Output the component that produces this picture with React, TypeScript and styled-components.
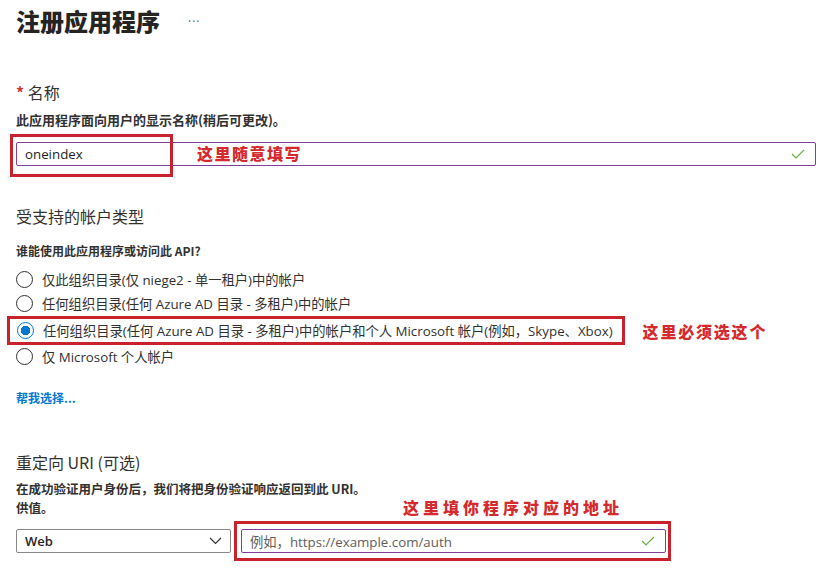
import { createGlobalStyle, styled } from 'styled-components';

const GlobalStyle = createGlobalStyle`
  body {
    margin: 0;
    background: #ffffff;
    font-family: 'Open Sans', 'Noto Sans CJK SC', sans-serif;
    color: #323130;
  }
`;

const accounts = [
  '仅此组织目录(仅 niege2 - 单一租户)中的帐户',
  '任何组织目录(任何 Azure AD 目录 - 多租户)中的帐户',
  '任何组织目录(任何 Azure AD 目录 - 多租户)中的帐户和个人 Microsoft 帐户(例如，Skype、Xbox)',
  '仅 Microsoft 个人帐户',
];

function Check() {
  return (
    <svg width="14" height="10" viewBox="0 0 14 10">
      <path d="M1 5 L5 9 L13 1" fill="none" stroke="#6bb244" strokeWidth="1.2" />
    </svg>
  );
}

function Chevron() {
  return (
    <svg width="13" height="8" viewBox="0 0 13 8">
      <path d="M1 1 L6.5 6.5 L12 1" fill="none" stroke="#323130" strokeWidth="1.1" />
    </svg>
  );
}

export default function App() {
  return (
    <Page>
      <GlobalStyle />
      <TitleRow>
        <Title>注册应用程序</Title>
        <More>···</More>
      </TitleRow>

      <Label $top={44}>
        <Star>*</Star> 名称
      </Label>
      <Hint $top={9} $size={13}>
        此应用程序面向用户的显示名称(稍后可更改)。
      </Hint>
      <NameField>
        <TextBox>
          <span>oneindex</span>
          <Check />
        </TextBox>
        <MarkBox />
        <FloatNote $spacing={1.5}>这里随意填写</FloatNote>
      </NameField>

      <Label $top={39}>受支持的帐户类型</Label>
      <Hint $top={16} $size={12}>
        谁能使用此应用程序或访问此 API?
      </Hint>
      <Options>
        {accounts.map((text, i) =>
          i === 2 ? (
            <MarkedRow key={text}>
              <Marked>
                <Option>
                  <Radio $on />
                  {text}
                </Option>
              </Marked>
              <Note $spacing={1.8}>这里必须选这个</Note>
            </MarkedRow>
          ) : (
            <Option key={text}>
              <Radio />
              {text}
            </Option>
          ),
        )}
      </Options>
      <HelpLink href="#">帮我选择...</HelpLink>

      <Label $top={45}>重定向 URI (可选)</Label>
      <DescRow>
        <Desc>
          在成功验证用户身份后，我们将把身份验证响应返回到此 URI。
          <br />
          供值。
        </Desc>
        <Note $spacing={4}>这里填你程序对应的地址</Note>
      </DescRow>
      <UriRow>
        <Select>
          <span>Web</span>
          <Chevron />
        </Select>
        <Marked $pad="5px 2px 5px 4px">
          <TextBox $width={425} $placeholder>
            <span>例如，https://example.com/auth</span>
            <Check />
          </TextBox>
        </Marked>
      </UriRow>
    </Page>
  );
}

const Page = styled.div`
  padding: 5px 16px 20px;
`;

const TitleRow = styled.div`
  display: flex;
  align-items: center;
  gap: 28px;
`;

const Title = styled.h1`
  margin: 0;
  font-family: 'Noto Sans CJK SC', sans-serif;
  font-size: 24px;
  line-height: 32px;
  font-weight: 900;
  color: #252423;
`;

const More = styled.span`
  font-size: 12px;
  color: #605e5c;
  letter-spacing: 1px;
`;

const Label = styled.div<{ $top: number }>`
  margin-top: ${(p) => p.$top}px;
  font-family: 'Noto Sans CJK SC', sans-serif;
  font-size: 16px;
  line-height: 22px;
  color: #323130;
`;

const Star = styled.span`
  color: #d13438;
  font-weight: 700;
`;

const Hint = styled.div<{ $top: number; $size: number }>`
  margin-top: ${(p) => p.$top}px;
  font-family: 'Noto Sans CJK SC', sans-serif;
  font-size: ${(p) => p.$size}px;
  line-height: 16px;
  font-weight: 700;
  color: #323130;
`;

const NameField = styled.div`
  position: relative;
  margin-top: 14px;
`;

const TextBox = styled.div<{ $width?: number; $placeholder?: boolean }>`
  box-sizing: border-box;
  width: ${(p) => (p.$width ? `${p.$width}px` : '800px')};
  height: 24px;
  display: flex;
  align-items: center;
  justify-content: space-between;
  padding: 0 10px 0 8px;
  border: 1px solid #7f3f98;
  border-radius: 2px;
  font-family: 'Open Sans', 'Noto Sans CJK SC', sans-serif;
  font-size: 13.3px;
  color: ${(p) => (p.$placeholder ? '#605e5c' : '#252423')};
`;

const MarkBox = styled.div`
  position: absolute;
  left: -6px;
  top: -8px;
  width: 157px;
  height: 37px;
  border: 3px solid #c8232c;
`;

const Note = styled.span<{ $spacing: number }>`
  font-family: 'Noto Sans CJK SC', sans-serif;
  font-size: 16px;
  line-height: 20px;
  font-weight: 900;
  letter-spacing: ${(p) => p.$spacing}px;
  color: #d42a2e;
`;

const FloatNote = styled(Note)`
  position: absolute;
  left: 181px;
  top: 1px;
`;

const Options = styled.div`
  margin-top: 9px;
  display: flex;
  flex-direction: column;
  gap: 2px;
`;

const Option = styled.div`
  display: flex;
  align-items: center;
  gap: 9px;
  height: 22px;
  font-family: 'Open Sans', 'Noto Sans CJK SC', sans-serif;
  font-size: 13.3px;
  color: #323130;
  white-space: nowrap;
`;

const Radio = styled.span<{ $on?: boolean }>`
  box-sizing: border-box;
  width: 17px;
  height: 17px;
  flex: none;
  border-radius: 50%;
  border: 1px solid ${(p) => (p.$on ? '#0078d4' : '#323130')};
  background: ${(p) =>
    p.$on ? 'radial-gradient(circle, #0078d4 0 4.5px, #fff 5px)' : '#fff'};
`;

const MarkedRow = styled.div`
  display: flex;
  align-items: center;
  gap: 18px;
  margin: 0 0 -2px -9px;
`;

const Marked = styled.div<{ $pad?: string }>`
  border: 3px solid #c8232c;
  padding: ${(p) => p.$pad ?? '0 9px 1px 7px'};
`;

const HelpLink = styled.a`
  display: block;
  margin-top: 23px;
  font-family: 'Noto Sans CJK SC', sans-serif;
  font-size: 12px;
  line-height: 16px;
  font-weight: 700;
  color: #0078d4;
  text-decoration: none;
`;

const DescRow = styled.div`
  display: flex;
  align-items: flex-end;
  margin-top: 7px;
`;

const Desc = styled.div`
  width: 387px;
  font-family: 'Noto Sans CJK SC', sans-serif;
  font-size: 12.5px;
  line-height: 18.5px;
  font-weight: 700;
  color: #323130;
`;

const UriRow = styled.div`
  display: flex;
  align-items: center;
  gap: 3px;
  margin-top: 4px;
`;

const Select = styled.div`
  box-sizing: border-box;
  width: 215px;
  height: 24px;
  display: flex;
  align-items: center;
  justify-content: space-between;
  padding: 0 8px 0 8px;
  border: 1px solid #8a8886;
  border-radius: 2px;
  font-family: 'Open Sans', sans-serif;
  font-size: 13px;
  font-weight: 600;
  color: #252423;
`;
